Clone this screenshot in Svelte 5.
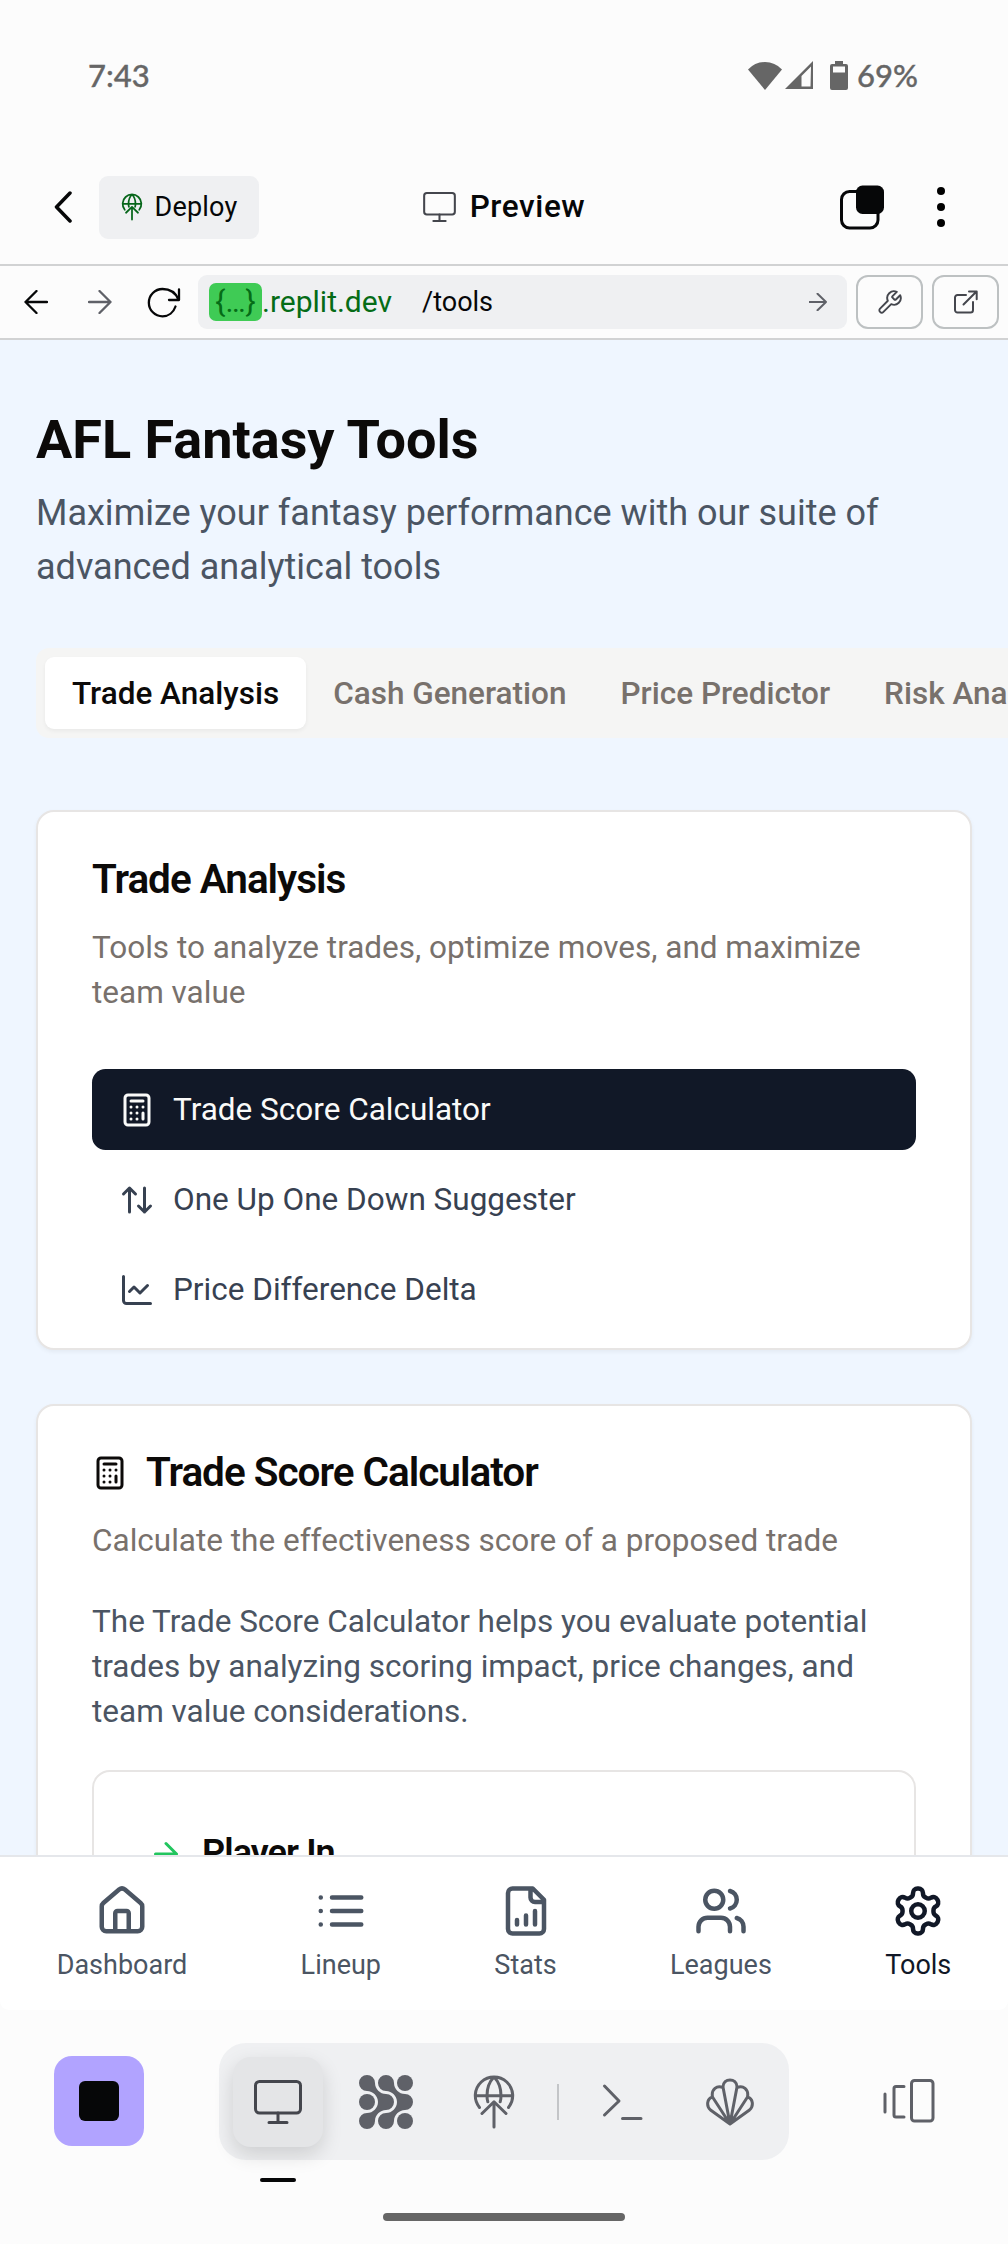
<script>
  const tabs = ['Trade Analysis', 'Cash Generation', 'Price Predictor', 'Risk Analysis'];
  const tools = [
    { icon: 'calculator', label: 'Trade Score Calculator' },
    { icon: 'updown', label: 'One Up One Down Suggester' },
    { icon: 'chart', label: 'Price Difference Delta' },
  ];
  const nav = [
    { icon: 'home', label: 'Dashboard' },
    { icon: 'list', label: 'Lineup' },
    { icon: 'file', label: 'Stats' },
    { icon: 'users', label: 'Leagues' },
    { icon: 'gear', label: 'Tools' },
  ];
  let activeTab = $state(0);
  let activeTool = $state(0);
  let activeNav = $state(4);

  // Stroke icons on a 24-unit grid
  const paths = {
    calculator:
      'M6 2h12a2 2 0 0 1 2 2v16a2 2 0 0 1-2 2H6a2 2 0 0 1-2-2V4a2 2 0 0 1 2-2zM8 6h8M16 14v4M16 10h.01M12 10h.01M8 10h.01M12 14h.01M8 14h.01M12 18h.01M8 18h.01',
    updown: 'm21 16-4 4-4-4M17 20V4M3 8l4-4 4 4M7 4v16',
    chart: 'M3 3v16a2 2 0 0 0 2 2h16M19 9l-5 5-4-4-3 3',
    home: 'M15 21v-8a1 1 0 0 0-1-1h-4a1 1 0 0 0-1 1v8M3 10a2 2 0 0 1 .709-1.528l7-5.999a2 2 0 0 1 2.582 0l7 5.999A2 2 0 0 1 21 10v9a2 2 0 0 1-2 2H5a2 2 0 0 1-2-2z',
    list: 'M8 6h13M8 12h13M8 18h13M3 6h.01M3 12h.01M3 18h.01',
    file: 'M15 2H6a2 2 0 0 0-2 2v16a2 2 0 0 0 2 2h12a2 2 0 0 0 2-2V7ZM14 2v4a2 2 0 0 0 2 2h4M8 18v-2M12 18v-4M16 18v-6',
    users:
      'M16 21v-2a4 4 0 0 0-4-4H6a4 4 0 0 0-4 4v2M9 11a4 4 0 1 0 0-8 4 4 0 0 0 0 8M22 21v-2a4 4 0 0 0-3-3.87M16 3.13a4 4 0 0 1 0 7.75',
    gear: 'M12.22 2h-.44a2 2 0 0 0-2 2v.18a2 2 0 0 1-1 1.73l-.43.25a2 2 0 0 1-2 0l-.15-.08a2 2 0 0 0-2.73.73l-.22.38a2 2 0 0 0 .73 2.73l.15.1a2 2 0 0 1 1 1.72v.51a2 2 0 0 1-1 1.74l-.15.09a2 2 0 0 0-.73 2.73l.22.38a2 2 0 0 0 2.73.73l.15-.08a2 2 0 0 1 2 0l.43.25a2 2 0 0 1 1 1.73V20a2 2 0 0 0 2 2h.44a2 2 0 0 0 2-2v-.18a2 2 0 0 1 1-1.73l.43-.25a2 2 0 0 1 2 0l.15.08a2 2 0 0 0 2.73-.73l.22-.39a2 2 0 0 0-.73-2.73l-.15-.08a2 2 0 0 1-1-1.74v-.5a2 2 0 0 1 1-1.74l.15-.09a2 2 0 0 0 .73-2.73l-.22-.38a2 2 0 0 0-2.73-.73l-.15.08a2 2 0 0 1-2 0l-.43-.25a2 2 0 0 1-1-1.73V4a2 2 0 0 0-2-2zM12 15a3 3 0 1 0 0-6 3 3 0 0 0 0 6',
    arrow: 'M5 12h14M12 5l7 7-7 7',
    wrench:
      'M14.7 6.3a1 1 0 0 0 0 1.4l1.6 1.6a1 1 0 0 0 1.4 0l3.77-3.77a6 6 0 0 1-7.94 7.94l-6.91 6.91a2.12 2.12 0 0 1-3-3l6.91-6.91a6 6 0 0 1 7.94-7.94l-3.76 3.76z',
  };
</script>

{#snippet icon(name)}
  <svg class="icon" viewBox="0 0 24 24"><path d={paths[name]} /></svg>
{/snippet}

{#snippet monitor()}
  <svg class="monitor" viewBox="0 0 48 44">
    <rect x="1.5" y="1.5" width="45" height="31.5" rx="4" />
    <path d="M24 33v9M15 42.5h18" />
  </svg>
{/snippet}

{#snippet globe()}
  <svg class="globe" viewBox="0 0 44 56">
    <path d="M7.5 33.5A18.7 18.7 0 1 1 36.5 33.5M3.3 21.7h37.4M22 3C17 8 15 15 15 21.7q0 3.3.8 6M22 3c5 5 7 12 7 18.7q0 3.3-.8 6M22 53V28M10 39.5 22 27.8l12 11.7" />
  </svg>
{/snippet}

<div class="screen">
  <div class="status">
    <span class="time">7:43</span>
    <div class="indicators">
      <svg width="34" height="29" viewBox="0 0 34 29"><path d="M0 8.5Q7 1 17 1t17 7.500L17 29z" fill="#666" /></svg>
      <svg class="signal" width="28" height="28" viewBox="0 0 28 28"><path fill="#666" fill-rule="evenodd" d="M28 0v28H0zM26 5.500 16.500 15v10.500H25.500z" /></svg>
      <svg class="battery" width="18" height="29" viewBox="0 0 18 29"><path fill="#666" fill-rule="evenodd" d="M5 0h8v3h3q2 0 2 2v22q0 2-2 2H2q-2 0-2-2V5q0-2 2-2h3zM3 5.500v6h12v-6z" /></svg>
      <span class="percent">69%</span>
    </div>
  </div>

  <header class="header">
    <div class="header-left">
      <svg class="back" width="18" height="32" viewBox="0 0 18 32"><path d="M16 2 2.500 16 16 30" /></svg>
      <button class="deploy">{@render globe()}<span>Deploy</span></button>
    </div>
    <div class="header-title">{@render monitor()}<span>Preview</span></div>
    <div class="header-right">
      <svg width="44" height="45" viewBox="0 0 44 45">
        <rect x="1.500" y="6.500" width="36.500" height="36.500" rx="8" fill="none" stroke="#060708" stroke-width="3" />
        <rect x="16" y="0.500" width="28" height="28.500" rx="6.500" fill="#060708" />
      </svg>
      <svg width="8" height="40" viewBox="0 0 8 40"><circle cx="4" cy="4" r="4" /><circle cx="4" cy="20" r="4" /><circle cx="4" cy="36" r="4" /></svg>
    </div>
  </header>

  <div class="browser">
    <svg class="line nav-back" width="24" height="24" viewBox="0 0 24 24"><path d="M23 12H1.500M12.500 1 1.500 12l11 11" /></svg>
    <svg class="line nav-fwd" width="24" height="24" viewBox="0 0 24 24"><path d="M1 12h21.500M11.500 1l11 11-11 11" /></svg>
    <svg class="line reload" width="34" height="31" viewBox="0 0 34 31"><path d="M32 2.500v10.500H22M31.500 12.500C28.500 5.500 22.500 2 15.500 2A13.600 13.600 0 0 0 15.500 29.300C21.500 29.300 26.500 25.500 28.500 19.500" /></svg>
    <div class="url">
      <span class="badge">{'{…}'}</span><span class="host">.replit.dev</span>
      <span class="path">/tools</span>
      <svg class="go" width="18" height="18" viewBox="0 0 18 18"><path d="M0 9h17M8.500.800 17 9l-8.500 8.200" /></svg>
    </div>
    <button class="square">{@render icon('wrench')}</button>
    <button class="square"><svg class="external" width="24" height="24" viewBox="0 0 24 24"><path d="M12 5H3.500A2.500 2.500 0 0 0 1 7.500v12.500A2.500 2.500 0 0 0 3.500 22.500h13a2.500 2.500 0 0 0 2.500-2.500v-8M15 1.500h7.700v7.700M22.500 1.500 9.500 14.500" /></svg></button>
  </div>

  <main class="page">
    <h1>AFL Fantasy Tools</h1>
    <p class="lead">Maximize your fantasy performance with our suite of advanced analytical tools</p>

    <div class="tabs">
      {#each tabs as tab, i}
        <button class="tab" class:active={i === activeTab} onclick={() => (activeTab = i)}>{tab}</button>
      {/each}
    </div>

    <section class="card">
      <h2>Trade Analysis</h2>
      <p class="desc">Tools to analyze trades, optimize moves, and maximize team value</p>
      <div class="tools">
        {#each tools as tool, i}
          <button class="tool" class:active={i === activeTool} onclick={() => (activeTool = i)}>
            {@render icon(tool.icon)}<span>{tool.label}</span>
          </button>
        {/each}
      </div>
    </section>

    <section class="card">
      <h2>{@render icon('calculator')}Trade Score Calculator</h2>
      <p class="desc">Calculate the effectiveness score of a proposed trade</p>
      <p class="body">The Trade Score Calculator helps you evaluate potential trades by analyzing scoring impact, price changes, and team value considerations.</p>
      <div class="player">
        <h3>{@render icon('arrow')}Player In</h3>
      </div>
    </section>
  </main>

  <nav class="bottom">
    {#each nav as item, i}
      <button class="nav-item" class:active={i === activeNav} onclick={() => (activeNav = i)}>
        {@render icon(item.icon)}<span>{item.label}</span>
      </button>
    {/each}
  </nav>

  <footer class="dock-area">
    <button class="stop"><span></span></button>
    <div class="dock">
      <div class="slot selected">{@render monitor()}</div>
      <div class="slot">
        <svg width="54" height="54" viewBox="0 0 54 54" fill="#5f6168">
          <path id="strand" d="M8 0A8 8 0 0 1 16 8C16 14 21 19 27 19A8 8 0 0 1 27 35C21 35 16 40 16 46A8 8 0 1 1 8 38C14 38 19 33 19 27S14 16 8 16A8 8 0 0 1 8 0Z" />
          <use href="#strand" x="19" />
          <circle cx="46" cy="8" r="8" /><circle cx="8" cy="27" r="8" /><circle cx="46" cy="46" r="8" />
        </svg>
      </div>
      <div class="slot">{@render globe()}</div>
      <span class="divider"></span>
      <div class="slot"><svg class="gray terminal" width="42" height="38" viewBox="0 0 42 38"><path d="M3.500 3 18 18 3.500 32M21.500 35.500H40" /></svg></div>
      <div class="slot"><svg class="gray" width="48" height="48" viewBox="0 0 48 48"><path d="M24 46 17 9C17-.500 31-.500 31 9ZM17 9.500C11 7 5 11 6.500 19L24 46 41.500 19C43 11 37 7 31 9.500M6.500 19C1 20.500 0 28 4.500 32L24 46 43.500 32C48 28 47 20.500 41.500 19" /></svg></div>
    </div>
    <svg class="gray layout" width="52" height="44" viewBox="0 0 52 44"><rect x="28.500" y="1.500" width="21.500" height="40.500" rx="3" /><path d="M21 7.500h-8q-2 0-2 2v26.500q0 2 2 2h8M2 15v18" /></svg>
    <span class="underline"></span>
    <span class="home-bar"></span>
  </footer>
</div>

<style>
  :global(body) { margin: 0; background: #fcfcfc; }
  .screen {
    width: 1008px; height: 2244px; overflow: hidden; display: flex; flex-direction: column;
    font-family: Roboto, sans-serif; background: #fcfcfc;
  }
  button { font: inherit; border: 0; padding: 0; margin: 0; background: none; color: inherit; }
  h1, h2, h3, p { margin: 0; }
  svg { display: block; flex: none; }
  .icon, .monitor, .globe, .line, .gray, .back, .go, .external {
    fill: none; stroke: currentColor; stroke-linecap: round; stroke-linejoin: round;
  }
  .icon { stroke-width: 2; width: 36px; height: 36px; }
  .monitor, .globe, .line, .gray { stroke-width: 3; }

  .status {
    height: 150px; flex: none; box-sizing: border-box; padding: 0 90px 0 88px; display: flex;
    align-items: center; justify-content: space-between; color: #666;
    font: 500 31px Lato, sans-serif;
  }
  .time, .percent { -webkit-text-stroke: 0.35px #666; padding-bottom: 1px; }
  .indicators { display: flex; align-items: center; }
  .signal { margin-left: 3px; }
  .battery { margin: 0 9px 0 17px; }

  .header {
    height: 116px; flex: none; box-sizing: border-box; border-bottom: 2px solid #d1d2d3;
    display: grid; grid-template-columns: 1fr auto 1fr; align-items: center; color: #060708;
  }
  .header-left { display: flex; align-items: center; padding-left: 54px; gap: 27px; }
  .back { stroke-width: 3.500; }
  .deploy {
    height: 63px; width: 160px; border-radius: 9px; background: #eff0f2; display: flex;
    align-items: center; justify-content: center; gap: 12px; font-size: 27px; letter-spacing: 0.2px;
  }
  .deploy span { padding-bottom: 1px; }
  .deploy .globe { width: 22px; height: 28px; color: #06661a; stroke-width: 3.500; }
  .header-title { display: flex; align-items: center; gap: 14px; font-size: 31.500px; font-weight: 500; letter-spacing: 0.6px; }
  .header-title span { padding-bottom: 2px; }
  .header-title .monitor { width: 33px; height: 30px; color: #44464d; }
  .header-right { display: flex; align-items: center; justify-content: flex-end; gap: 53px; padding-right: 63px; }

  .browser {
    height: 74px; flex: none; box-sizing: border-box; border-bottom: 2px solid #d1d2d3;
    display: flex; align-items: center; padding: 0 9px 0 24px; color: #060708;
  }
  .line { stroke-width: 2.300; }
  .nav-fwd { margin-left: 40px; color: #5f6168; }
  .reload { margin-left: 35px; }
  .url {
    margin-left: 17px; width: 649px; height: 54px; box-sizing: border-box; border-radius: 9px;
    background: #eff0f2; display: flex; align-items: center; padding: 0 20px 0 11px; font-size: 30px;
  }
  .badge {
    width: 53px; height: 38px; border-radius: 7px; background: #3fcb55; color: #056c17;
    display: flex; align-items: center; justify-content: center; line-height: 1;
  }
  .host { color: #056c17; padding-bottom: 2px; }
  .path { margin-left: 30px; font-size: 27px; }
  .go { margin-left: auto; color: #5f6168; stroke-width: 2; }
  .square {
    width: 67px; height: 54px; box-sizing: border-box; border: 2px solid #bdc1c2; border-radius: 12px;
    margin-left: 9px; display: flex; align-items: center; justify-content: center; color: #44464d;
  }
  .square .icon { width: 27px; height: 27px; stroke-width: 1.700; }
  .external { stroke-width: 2; }

  .page {
    height: 1515px; flex: none; box-sizing: border-box; overflow: hidden; padding: 64px 36px 0;
    background: #eff6ff;
  }
  h1 { font-size: 54px; line-height: 72px; font-weight: 700; color: #0c0a09; }
  .lead { margin-top: 10px; font-size: 36px; line-height: 54px; color: #4b5563; }
  .tabs {
    margin-top: 54px; width: 1160px; height: 90px; box-sizing: border-box; padding: 9px; display: flex;
    background: #f5f5f4; border-radius: 13px;
  }
  .tab { padding: 0 27px; border-radius: 9px; font-size: 31.500px; font-weight: 500; color: #78716c; white-space: nowrap; }
  .tab.active { background: #fff; color: #0c0a09; box-shadow: 0 2px 4px rgba(0, 0, 0, 0.05); }

  .card {
    box-sizing: border-box; background: #fff; border: 2px solid #e7e5e4; border-radius: 18px;
    padding: 44px 54px 18px; margin-top: 72px; box-shadow: 0 2px 4px rgba(0, 0, 0, 0.05);
  }
  .card + .card { margin-top: 54px; padding-top: 43px; height: 700px; }
  h2 {
    display: flex; align-items: center; gap: 18px; font-size: 40.500px; line-height: 45px; height: 45px;
    font-weight: 600; letter-spacing: -0.025em; color: #0c0a09; padding-top: 1px;
  }
  .desc { margin-top: 23px; font-size: 31.500px; line-height: 45px; color: #78716c; }
  .tools { margin-top: 54px; display: flex; flex-direction: column; gap: 9px; }
  .tool {
    height: 81px; padding: 0 27px; display: flex; align-items: center; gap: 18px; border-radius: 13.500px;
    font-size: 31.500px; color: #374151; text-align: left;
  }
  .tool.active { background: #111827; color: #fafaf9; }
  .body { margin-top: 36px; font-size: 31.500px; line-height: 45px; color: #4b5563; }
  .player {
    margin-top: 36px; height: 400px; box-sizing: border-box; border: 2px solid #e7e5e4;
    border-radius: 18px; padding: 59px 54px;
  }
  h3 {
    display: flex; align-items: center; gap: 18px; font-size: 36px; line-height: 45px; font-weight: 600;
    letter-spacing: -0.025em; color: #0c0a09;
  }
  h3 .icon { color: #22c55e; }

  .bottom {
    height: 155px; flex: none; box-sizing: border-box; border-top: 2px solid #e5e7eb; background: #fff;
    border-radius: 0 0 9px 9px; display: flex; justify-content: space-around; padding-top: 27px; color: #4b5563;
  }
  .nav-item { display: flex; flex-direction: column; align-items: center; gap: 9px; font-size: 27px; line-height: 36px; }
  .nav-item .icon { width: 54px; height: 54px; }
  .nav-item.active { color: #111827; }

  .dock-area { position: relative; height: 234px; flex: none; display: flex; align-items: flex-start; }
  .stop {
    width: 90px; height: 90px; margin: 46px 0 0 54px; border-radius: 18px; background: #b1a3ff;
    display: flex; align-items: center; justify-content: center;
  }
  .stop span { width: 40px; height: 40px; border-radius: 6px; background: #060708; }
  .dock {
    margin: 33px 0 0 75px; width: 570px; height: 117px; box-sizing: border-box; padding: 0 14px;
    border-radius: 27px; background: #eff0f2; display: flex; align-items: center; gap: 18px;
  }
  .slot {
    width: 90px; height: 90px; flex: none; border-radius: 18px; display: flex; align-items: center;
    justify-content: center; color: #5f6168;
  }
  .selected { background: #e4e5e7; color: #44464d; box-shadow: 0 8px 20px rgba(0, 0, 0, 0.14); }
  .slot .monitor { width: 48px; height: 44px; }
  .slot .globe { width: 44px; height: 56px; }
  .divider { width: 2px; height: 36px; background: #c3c5c8; }
  .gray { color: #5f6168; }
  .layout { margin: 69px 0 0 94px; }
  .underline {
    position: absolute; left: 260px; top: 168px; width: 36px; height: 4px; border-radius: 2px; background: #060708;
  }
  .home-bar {
    position: absolute; left: 383px; top: 203px; width: 242px; height: 8px; border-radius: 4px; background: #666;
  }
</style>
